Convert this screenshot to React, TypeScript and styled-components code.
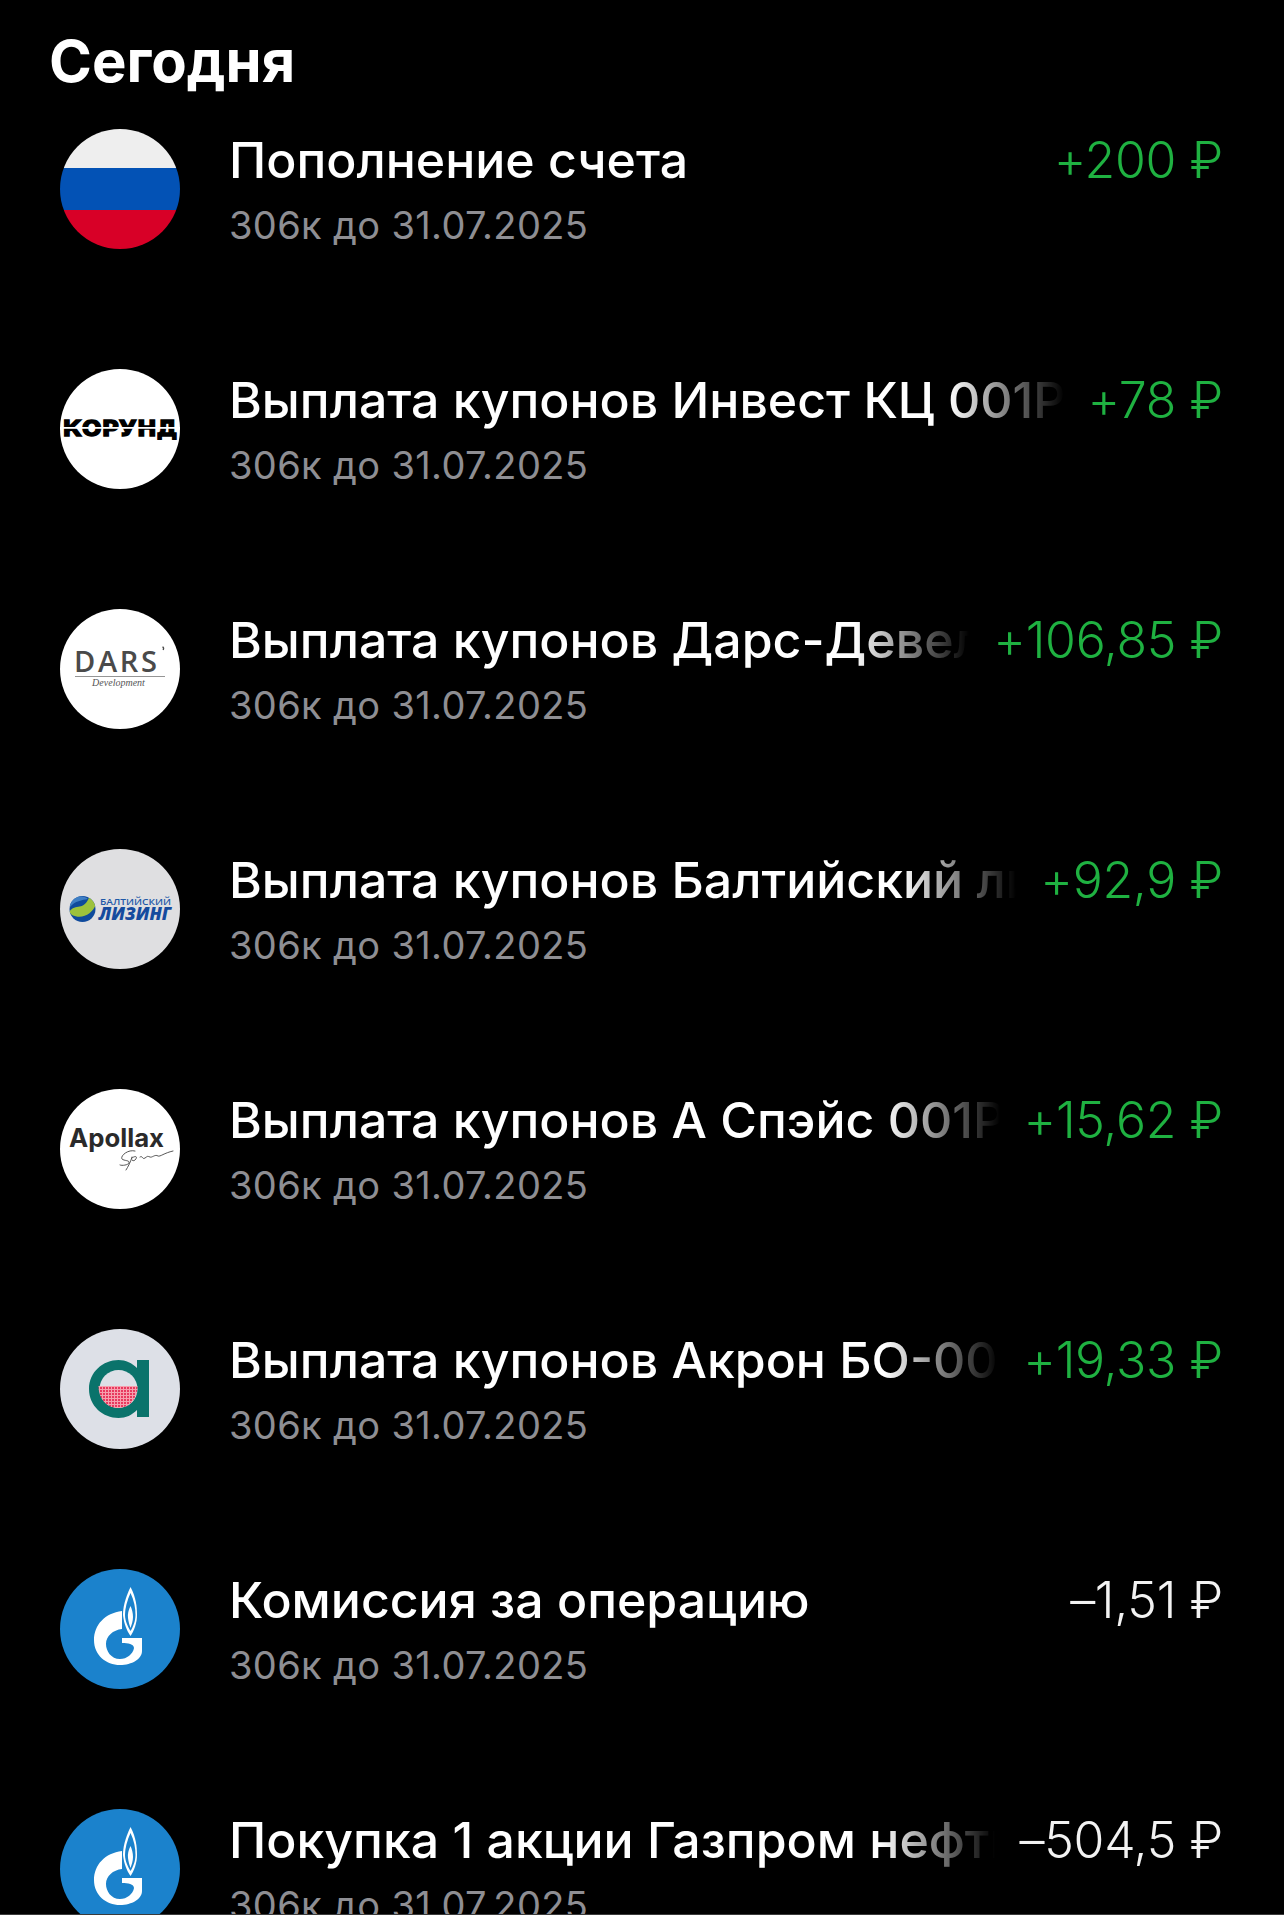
import React from "react";
import styled, { createGlobalStyle } from "styled-components";

const Global = createGlobalStyle`
  html, body { margin: 0; padding: 0; background: #000; }
  #root { height: 1915px; overflow: hidden; }
`;

const Page = styled.main`
  position: relative;
  width: 1284px;
  height: 1915px;
  overflow: hidden;
  background: #000;
  color: #fff;
  font-family: Inter, "Liberation Sans", sans-serif;
  &::after {
    content: "";
    position: absolute;
    left: 0;
    right: 0;
    bottom: 0;
    height: 1px;
    background: #3a3a3a;
  }
`;

const Heading = styled.h1`
  margin: 0;
  height: 129px;
  padding: 28px 0 0 49px;
  box-sizing: border-box;
  font-size: 58px;
  line-height: 66px;
  font-weight: 700;
  letter-spacing: 0;
`;

const List = styled.div`
  display: flex;
  flex-direction: column;
  padding: 0 60px;
`;

const Row = styled.div`
  display: flex;
  flex: none;
  height: 240px;
  align-items: flex-start;
`;

const Avatar = styled.svg`
  display: block;
  flex: none;
  width: 120px;
  height: 120px;
  margin-right: 49px;
`;

const Body = styled.div`
  flex: 1;
  min-width: 0;
  margin-right: 24px;
`;

const Title = styled.div<{ $fade: boolean }>`
  font-size: 50px;
  line-height: 60px;
  font-weight: 500;
  white-space: nowrap;
  overflow: hidden;
  padding-top: 1px;
  margin-bottom: 5px;
  ${(p) =>
    p.$fade
      ? `mask-image: linear-gradient(to right, #000 calc(100% - 115px), transparent 100%);`
      : ""}
`;

const Sub = styled.div`
  font-size: 38px;
  line-height: 60px;
  font-weight: 400;
  letter-spacing: 0.35px;
  color: #8e8e93;
  white-space: nowrap;
`;

const Amount = styled.div<{ $in: boolean }>`
  flex: none;
  padding: 1px 1px 0 0;
  font-size: 50px;
  line-height: 60px;
  font-weight: 300;
  letter-spacing: -0.3px;
  white-space: nowrap;
  color: ${(p) => (p.$in ? "#1fb141" : "#f2f2f2")};
`;

const Disc = ({ fill }: { fill: string }) => <circle cx="60" cy="60" r="60" fill={fill} />;

const Flag = () => (
  <Avatar viewBox="0 0 120 120">
    <defs>
      <clipPath id="flag-clip">
        <circle cx="60" cy="60" r="60" />
      </clipPath>
    </defs>
    <g clipPath="url(#flag-clip)">
      <rect width="120" height="39" fill="#eeeeee" />
      <rect y="39" width="120" height="42" fill="#0352b5" />
      <rect y="81" width="120" height="39" fill="#d80027" />
    </g>
  </Avatar>
);

const Korund = () => (
  <Avatar viewBox="0 0 120 120">
    <Disc fill="#fff" />
    <text
      x="60"
      y="67"
      textAnchor="middle"
      textLength="115"
      lengthAdjust="spacingAndGlyphs"
      fontFamily="'DejaVu Sans', sans-serif"
      fontWeight="700"
      fontSize="22"
      fill="#000"
      stroke="#000"
      strokeWidth="1.300"
    >
      КОРУНД
    </text>
    <rect x="0" y="58" width="120" height="1.800" fill="#fff" />
  </Avatar>
);

const Dars = () => (
  <Avatar viewBox="0 0 120 120">
    <Disc fill="#fff" />
    <text
      x="14"
      y="63"
      textLength="83"
      fontFamily="'Open Sans', sans-serif"
      fontWeight="600"
      fontSize="29"
      fill="#4a4a4a"
    >
      DARS
    </text>
    <path d="M102.500 38 q1.800 .6 .6 3" stroke="#4a4a4a" strokeWidth="1.400" fill="none" />
    <rect x="15" y="67" width="90" height="0.9" fill="#8a8a8a" />
    <text
      x="58.500"
      y="77"
      textAnchor="middle"
      fontFamily="'Liberation Serif', serif"
      fontStyle="italic"
      fontSize="10"
      fill="#555"
    >
      Development
    </text>
  </Avatar>
);

const Baltic = () => (
  <Avatar viewBox="0 0 120 120">
    <Disc fill="#dfdfe1" />
    <defs>
      <clipPath id="globe-clip">
        <circle cx="22.500" cy="60" r="13" />
      </clipPath>
    </defs>
    <circle cx="22.500" cy="60" r="13" fill="#0f4a9c" />
    <g clipPath="url(#globe-clip)">
      <path d="M9 63 C16 53 24 64 30 46 L37 47 C38 62 24 72 12 66 Z" fill="#9dc23c" />
      <path d="M10 52 C14 46 24 46 28 50 C22 51 15 52 10 58 Z" fill="#3f7fc4" />
    </g>
    <text
      x="40"
      y="56"
      textLength="71"
      lengthAdjust="spacingAndGlyphs"
      fontFamily="'Open Sans', sans-serif"
      fontWeight="600"
      fontSize="9.500"
      fill="#1f5aa8"
    >
      БАЛТИЙСКИЙ
    </text>
    <text
      x="39"
      y="71"
      textLength="72"
      lengthAdjust="spacingAndGlyphs"
      fontFamily="'Open Sans', sans-serif"
      fontStyle="italic"
      fontWeight="800"
      fontSize="18"
      fill="#154b9e"
    >
      ЛИЗИНГ
    </text>
  </Avatar>
);

const Apollax = () => (
  <Avatar viewBox="0 0 120 120">
    <Disc fill="#fff" />
    <text
      x="9"
      y="58"
      textLength="95"
      lengthAdjust="spacingAndGlyphs"
      fontFamily="Inter, sans-serif"
      fontWeight="700"
      fontSize="25"
      fill="#2a2a2a"
    >
      Apollax
    </text>
    <path
      d="M75 62 C68 60 60 67 62 70 C64 72 70 71 69 74 C68 76 62 77 60 76 M72 68 C71 72 68 78 66 81 M72 69 C76 66 78 68 75 71 C74 72 72 72 72 71 M80 68 C83 66 82 71 85 69 C88 67 87 67 90 68 C92 69 95 65 98 67 C100 68 104 64 113 62"
      fill="none"
      stroke="#444"
      strokeWidth="0.9"
      strokeLinecap="round"
    />
  </Avatar>
);

const Akron = () => (
  <Avatar viewBox="0 0 120 120">
    <Disc fill="#dde0e7" />
    <defs>
      <pattern id="akron-dots" width="3" height="3" patternUnits="userSpaceOnUse">
        <rect width="3" height="3" fill="#e8395f" />
        <rect width="1" height="3" fill="#f6a0ae" />
        <rect width="3" height="1" fill="#f6a0ae" />
      </pattern>
    </defs>
    <path
      d="M89 31 L89 88 L77 88 L77 81 C72 86 66 89 58.500 89 C43 89 29 77 29 60 C29 43 43 31 58.500 31 C66 31 72 34 77 39 L77 31 Z"
      fill="#0a736b"
    />
    <circle cx="58.500" cy="60" r="19" fill="#dde0e7" />
    <path d="M38.500 57 L77.500 57 C77.500 70 69 79 58 79 C47 79 38.500 70 38.500 57 Z" fill="url(#akron-dots)" />
  </Avatar>
);

const Gazprom = () => (
  <Avatar viewBox="0 0 120 120">
    <Disc fill="#1b82cc" />
    <path
      d="M62 42 C45 44 34 56 34 71 C34 86 46 96 60 96 C72 96 82 90 82 82 L82 69 L62 69 L62 74 C68 74 74 75 74 79 C73 85 67 90 60 90 C51 90 46 82 46 75 C46 67 53 61 62 60 Z"
      fill="#fff"
    />
    <path d="M70.500 18 C65 30 63 38 63 46 C64 55 67 62 70.500 67 C74 62 77 54 77 46 C77 38 76 28 70.500 18 Z" fill="#fff" />
    <path d="M70.500 24 C67 32 65 39 65 46 C65 52 68 58 70.500 62 C73 58 75.500 52 75.500 46 C75.500 39 74 31 70.500 24 Z" fill="#1b82cc" />
    <path d="M70.500 37 C68.500 41 67.500 45 68 49 C68.500 53 69.500 56 70.500 59 C71.500 56 73 52 73 48 C73 44 72 40 70.500 37 Z" fill="#fff" />
  </Avatar>
);

const rows = [
  { Logo: Flag, title: "Пополнение счета", amount: "+200 ₽", income: true, fade: false },
  { Logo: Korund, title: "Выплата купонов Инвест КЦ 001Р05", amount: "+78 ₽", income: true, fade: true },
  { Logo: Dars, title: "Выплата купонов Дарс-Девелопмент", amount: "+106,85 ₽", income: true, fade: true },
  { Logo: Baltic, title: "Выплата купонов Балтийский лизинг", amount: "+92,9 ₽", income: true, fade: true },
  { Logo: Apollax, title: "Выплата купонов А Спэйс 001Р01", amount: "+15,62 ₽", income: true, fade: true },
  { Logo: Akron, title: "Выплата купонов Акрон БО-001Р-03", amount: "+19,33 ₽", income: true, fade: true },
  { Logo: Gazprom, title: "Комиссия за операцию", amount: "–1,51 ₽", income: false, fade: false },
  { Logo: Gazprom, title: "Покупка 1 акции Газпром нефть", amount: "–504,5 ₽", income: false, fade: true },
];

export default function App() {
  return (
    <Page>
      <Global />
      <Heading>Сегодня</Heading>
      <List>
        {rows.map((r) => (
          <Row key={r.title}>
            <r.Logo />
            <Body>
              <Title $fade={r.fade}>{r.title}</Title>
              <Sub>306к до 31.07.2025</Sub>
            </Body>
            <Amount $in={r.income}>{r.amount}</Amount>
          </Row>
        ))}
      </List>
    </Page>
  );
}
